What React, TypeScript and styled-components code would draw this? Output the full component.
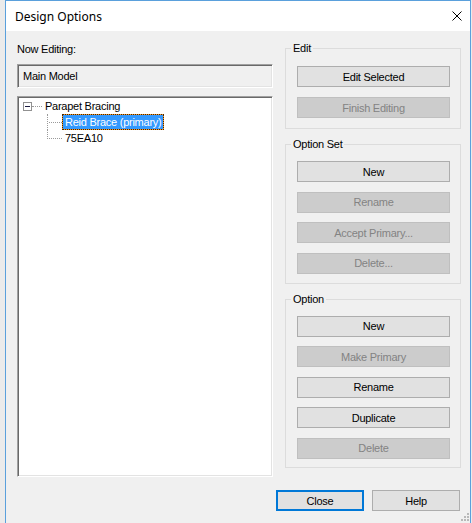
import React from "react";
import styled, { createGlobalStyle } from "styled-components";

const Global = createGlobalStyle`
  html, body { margin: 0; padding: 0; background: #ebebeb; }
  body { font-family: "Liberation Sans", Arial, sans-serif; font-size: 11px; letter-spacing: -0.25px; color: #000; }
  * { box-sizing: border-box; }
`;

const Page = styled.div`
  width: 472px;
  height: 523px;
  padding-left: 5px;
  overflow: hidden;
`;

const Window = styled.div`
  position: relative;
  width: 466px;
  height: 523px;
  border: 1px solid #5aa0dc;
  border-bottom: none;
  background: #f0f0f0;
  display: flex;
  flex-direction: column;
`;

const TitleBar = styled.div`
  height: 30px;
  flex: none;
  background: #fff;
  display: flex;
  align-items: center;
  justify-content: space-between;
  padding: 0 8px 0 9px;
  font-family: "Noto Sans", "Open Sans", sans-serif;
  font-size: 12px;
  letter-spacing: 0;
  color: #000;
`;

const Main = styled.div`
  display: flex;
  gap: 12px;
  padding: 12px 9px 0 11px;
`;

const LeftColumn = styled.div`
  width: 256px;
  display: flex;
  flex-direction: column;
`;

const FieldLabel = styled.div`
  height: 13px;
  line-height: 13px;
  margin-bottom: 8px;
`;

const sunken = `
  border-top: 1px solid #a0a0a0;
  border-left: 1px solid #a0a0a0;
  border-right: 1px solid #ffffff;
  border-bottom: 1px solid #ffffff;
  box-shadow: inset 1px 1px 0 #696969, inset -1px -1px 0 #e3e3e3;
`;

const ReadOnlyBox = styled.div`
  ${sunken}
  height: 24px;
  line-height: 22px;
  padding-left: 5px;
  margin-bottom: 8px;
  background: #f0f0f0;
`;

const TreeBox = styled.div`
  ${sunken}
  height: 381px;
  padding: 1px;
  background: #fff;
`;

const TreeRow = styled.div<{ $indent: number }>`
  height: 16px;
  display: flex;
  align-items: center;
  padding-left: ${(p) => p.$indent}px;
`;

const ExpandBox = styled.span`
  position: relative;
  width: 9px;
  height: 9px;
  border: 1px solid #919191;
  background: #fff;
  flex: none;
  &::after {
    content: "";
    position: absolute;
    left: 1px;
    top: 3px;
    width: 5px;
    height: 1px;
    background: #1a1a40;
  }
`;

const Connector = styled.span`
  width: 10px;
  height: 0;
  border-top: 1px dotted #9a9a9a;
  flex: none;
`;

const Branch = styled.span<{ $last: boolean }>`
  position: relative;
  width: 15px;
  height: 16px;
  flex: none;
  &::before {
    content: "";
    position: absolute;
    left: 0;
    top: 0;
    height: ${(p) => (p.$last ? "9px" : "16px")};
    border-left: 1px dotted #9a9a9a;
  }
  &::after {
    content: "";
    position: absolute;
    left: 2px;
    top: 8px;
    width: 13px;
    border-top: 1px dotted #9a9a9a;
  }
`;

const NodeLabel = styled.span<{ $selected?: boolean }>`
  height: 16px;
  line-height: 14px;
  padding: 0 2px;
  white-space: nowrap;
  border: 1px ${(p) => (p.$selected ? "dotted #4a2600" : "solid transparent")};
  color: ${(p) => (p.$selected ? "#fff" : "#000")};
  background: ${(p) =>
    p.$selected
      ? "linear-gradient(#3399ff, #3399ff) padding-box, #f39a2b border-box"
      : "transparent"};
`;

const RightColumn = styled.div`
  width: 176px;
  margin-top: 5px;
  display: flex;
  flex-direction: column;
  gap: 15px;
`;

const GroupBox = styled.div<{ $top: number; $bottom: number; $gap: number }>`
  position: relative;
  border: 1px solid #dcdcdc;
  padding: ${(p) => p.$top}px 10px ${(p) => p.$bottom}px 11px;
  display: flex;
  flex-direction: column;
  gap: ${(p) => p.$gap}px;
`;

const Caption = styled.span`
  position: absolute;
  top: -7px;
  left: 5px;
  padding: 0 2px;
  line-height: 13px;
  background: #f0f0f0;
`;

const Button = styled.button<{ $default?: boolean }>`
  height: 21px;
  width: 100%;
  padding: 0;
  font-family: "Liberation Sans", Arial, sans-serif;
  font-size: 11px;
  letter-spacing: -0.25px;
  color: #000;
  background: #e1e1e1;
  border: 1px solid #adadad;
  border-radius: 0;
  outline: none;
  &:disabled {
    color: #838383;
    background: #cccccc;
    border-color: #bfbfbf;
  }
`;

const BottomBar = styled.div`
  display: flex;
  justify-content: flex-end;
  gap: 8px;
  padding-right: 10px;
  margin-top: 13px;
`;

const DialogButton = styled(Button)<{ $default?: boolean }>`
  width: 88px;
  border: ${(p) => (p.$default ? "2px solid #0078d7" : "1px solid #adadad")};
`;

const Grip = styled.svg`
  position: absolute;
  right: 1px;
  bottom: 2px;
`;

export default function App() {
  return (
    <Page>
      <Global />
      <Window>
        <TitleBar>
          <span>Design Options</span>
          <svg width="10" height="10" viewBox="0 0 10 10">
            <path d="M0.5 0.5 L9.5 9.5 M9.5 0.5 L0.5 9.5" stroke="#000" strokeWidth="1" fill="none" />
          </svg>
        </TitleBar>
        <Main>
          <LeftColumn>
            <FieldLabel>Now Editing:</FieldLabel>
            <ReadOnlyBox>Main Model</ReadOnlyBox>
            <TreeBox>
              <TreeRow $indent={4}>
                <ExpandBox />
                <Connector />
                <NodeLabel>Parapet Bracing</NodeLabel>
              </TreeRow>
              <TreeRow $indent={28}>
                <Branch $last={false} />
                <NodeLabel $selected>Reid Brace (primary)</NodeLabel>
              </TreeRow>
              <TreeRow $indent={28}>
                <Branch $last />
                <NodeLabel>75EA10</NodeLabel>
              </TreeRow>
            </TreeBox>
          </LeftColumn>
          <RightColumn>
            <GroupBox $top={17} $bottom={10} $gap={10}>
              <Caption>Edit</Caption>
              <Button>Edit Selected</Button>
              <Button disabled>Finish Editing</Button>
            </GroupBox>
            <GroupBox $top={16} $bottom={9} $gap={9.5}>
              <Caption>Option Set</Caption>
              <Button>New</Button>
              <Button disabled>Rename</Button>
              <Button disabled>Accept Primary...</Button>
              <Button disabled>Delete...</Button>
            </GroupBox>
            <GroupBox $top={16} $bottom={8} $gap={9.5}>
              <Caption>Option</Caption>
              <Button>New</Button>
              <Button disabled>Make Primary</Button>
              <Button>Rename</Button>
              <Button>Duplicate</Button>
              <Button disabled>Delete</Button>
            </GroupBox>
          </RightColumn>
        </Main>
        <BottomBar>
          <DialogButton $default>Close</DialogButton>
          <DialogButton>Help</DialogButton>
        </BottomBar>
        <Grip width="8" height="8" viewBox="0 0 8 8">
          <rect x="6" y="0" width="2" height="2" fill="#b8b8b8" />
          <rect x="3" y="3" width="2" height="2" fill="#b8b8b8" />
          <rect x="6" y="3" width="2" height="2" fill="#b8b8b8" />
          <rect x="0" y="6" width="2" height="2" fill="#b8b8b8" />
          <rect x="3" y="6" width="2" height="2" fill="#b8b8b8" />
          <rect x="6" y="6" width="2" height="2" fill="#b8b8b8" />
        </Grip>
      </Window>
    </Page>
  );
}
